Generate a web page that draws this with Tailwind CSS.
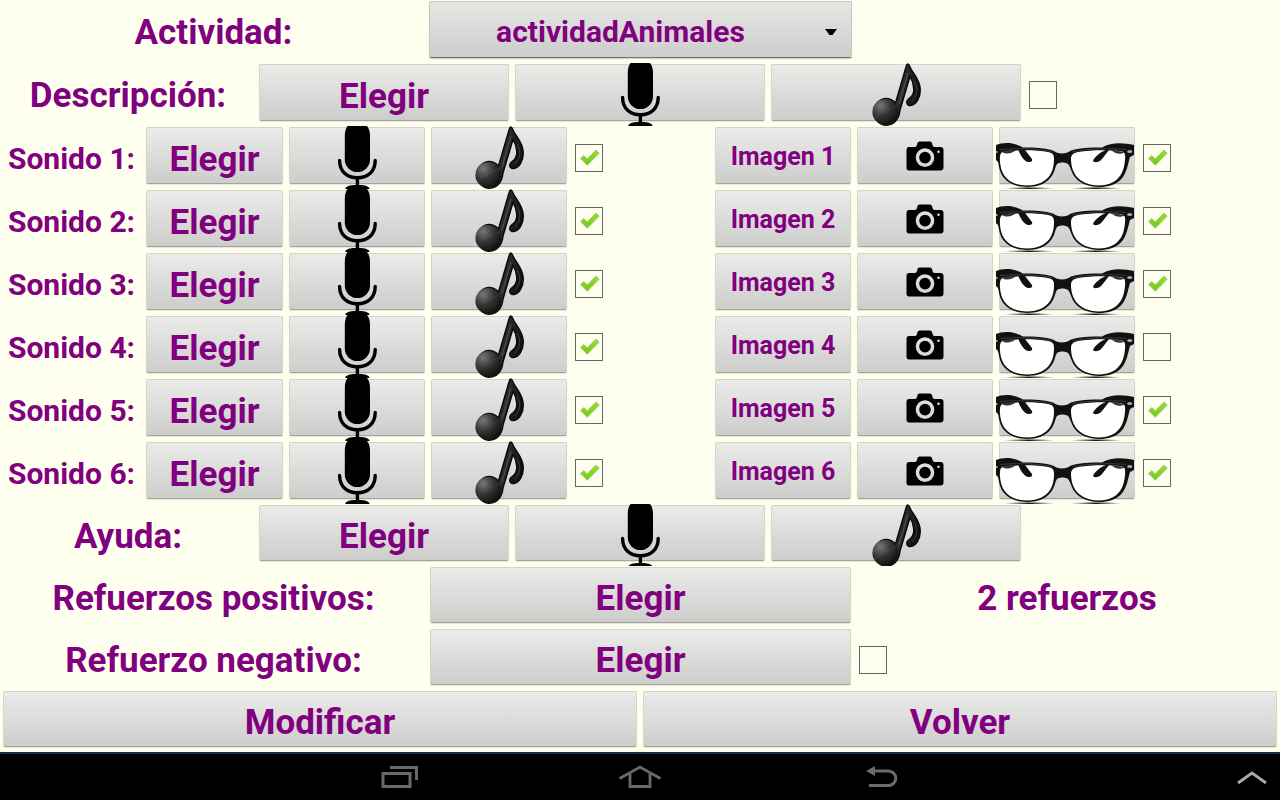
<!DOCTYPE html>
<html lang="es">
<head>
<meta charset="utf-8">
<meta name="viewport" content="width=device-width, initial-scale=1">
<title>Modificar actividad</title>
<script src="https://cdn.jsdelivr.net/npm/@tailwindcss/browser@4"></script>
</head>
<body class="flex min-h-screen flex-col bg-[#fffff0] font-['Roboto','Noto_Sans',sans-serif] font-bold text-[#800080]">

<svg class="absolute h-0 w-0" aria-hidden="true">
  <defs>
    <radialGradient id="ball" cx="0.3" cy="0.25" r="0.85">
      <stop offset="0" stop-color="#777"/><stop offset="0.5" stop-color="#333"/><stop offset="1" stop-color="#0c0c0c"/>
    </radialGradient>
    <linearGradient id="stem" x1="0" y1="0" x2="1" y2="0.3">
      <stop offset="0" stop-color="#111"/><stop offset="0.45" stop-color="#3c3c3c"/><stop offset="1" stop-color="#111"/>
    </linearGradient>
    <linearGradient id="tick" x1="0" y1="0" x2="0" y2="1">
      <stop offset="0" stop-color="#98e02c"/><stop offset="1" stop-color="#6fcb10"/>
    </linearGradient>
    <linearGradient id="shade">
      <stop offset="0" stop-color="#111" stop-opacity="0"/><stop offset="0.5" stop-color="#111"/><stop offset="1" stop-color="#111" stop-opacity="0"/>
    </linearGradient>
    <symbol id="mic" viewBox="0 0 40 63">
      <path d="M10.500 0H30Q33 3.500 33 10V33.500A12.600 12.600 0 0 1 7.800 33.500V10Q7.800 3.500 10.500 0Z"/>
      <path d="M2.600 34.500C2.600 45.500 10 51.800 20.400 51.800S38.200 45.500 38.200 34.500" fill="none" stroke="#000" stroke-width="3.400" stroke-linecap="round"/>
      <path d="M18.700 52H22.100V59C28 59 32.500 60.500 32.500 63H8.300C8.300 60.500 12.800 59 18.700 59Z"/>
    </symbol>
    <symbol id="note" viewBox="0 0 50 63">
      <path d="M36.800 1C38 1 38.500 3 39.500 5C43 12 49.300 17 49.300 27C49.300 35 45 42.500 39.500 42.500C35.500 42.500 34.500 38.500 37.500 36C42 33 43.500 29 42.500 24C42 19 40.500 16 39 13.500L29 47C28 58 21.500 62.300 14.500 62.300A13.500 13.500 0 0 1 14.500 35.500C19 35.500 22 37 24.500 40L35 4C35.500 2 36 1 36.800 1Z" fill="url(#stem)" stroke="#080808" stroke-width="1.400"/>
      <circle cx="14.300" cy="48.900" r="12.900" fill="url(#ball)"/>
      <path d="M4 56C8 48 15 47 25.500 43" stroke="#666" stroke-width="0.600" fill="none" opacity="0.500"/>
      <path d="M37 10L28 41" stroke="#666" stroke-width="1.200" fill="none" opacity="0.600"/>
      <path d="M43 18C47 25 47 32 41 38" stroke="#666" stroke-width="1" fill="none" opacity="0.500"/>
    </symbol>
    <symbol id="camera" viewBox="0 0 38 30">
      <path fill-rule="evenodd" d="M3 6H9Q10.500 6 11 4L11.500 2Q12 .5 13.500 .5H24Q25.500 .5 26 2L26.500 4Q27 6 28.500 6H34.500Q37.500 6 37.500 9V26.500Q37.500 29.500 34.500 29.500H3Q.5 29.500 .5 26.500V9Q.5 6 3 6ZM19 7.300A9.300 9.300 0 1 0 19 25.900A9.300 9.300 0 1 0 19 7.300ZM32.500 9.500A1.300 1.300 0 1 0 32.500 12.100A1.300 1.300 0 1 0 32.500 9.500Z"/>
      <circle cx="19" cy="16.600" r="5.800"/>
    </symbol>
    <symbol id="glasses" viewBox="0 0 139 63">
      <ellipse cx="33" cy="62.500" rx="25" ry="1" fill="url(#shade)"/>
      <ellipse cx="100" cy="62.500" rx="25" ry="1" fill="url(#shade)"/>
      <path d="M0 19C7 16 18 16 27 21.500C38 21.500 50 22 57 24.500C62 28.500 70 28.500 75 24.500C82 22 94 21.500 106 21.500C115 16 127 16.500 138 19V29L134 31C132 38 131 45 127 51C121 59 112 61 103 61C92 61 83 57 78 50C75 45 74 40 72 38C69 36 64 36 61 38C59 41 59 46 55 51C50 58 41 61 31 61C21 61 13 58 8 52C3 46 3 39 2 36L0 34Z" fill="#111"/>
      <path d="M4 36C3.500 28 4.500 25.500 10 25C25 24 42 24 52 26C57 27 58 29 58 33C58 44 54 59 31 59.500C11 59 5 48 4 36Z" fill="#fff"/>
      <path d="M75 33C75 29 77 27 82 26C94 24 112 24 124 25C129 25.500 129.500 28 129 34C128 46 123 59 103 59.500C80 59 75 44 75 33Z" fill="#fff"/>
      <path d="M22 23C24 29 28 35 32 36C35 36.500 37 35 36 33L29 24ZM112 23C106 25 98 31 97 35C98 37 103 36.500 106 33L113 24Z" fill="#111"/>
      <path d="M5 25C9 29 16 28 20 24ZM115 24C119 28 125 29 129 26Z" fill="#333"/>
      <path d="M4 23.500C20 22 45 22.500 57 26M76 26C90 22.500 118 22 130 23.500" stroke="#444" stroke-width="0.800" fill="none"/>
      <ellipse cx="133.700" cy="25.500" rx="2.600" ry="1.500" fill="#aaa"/>
      <path d="M0 26h1.500" stroke="#aaa" stroke-width="2"/>
    </symbol>
    <symbol id="check" viewBox="0 0 28 28">
      <path d="M5.500 14.500L8.800 11.500L12.200 14.800L21 6L24.300 9L12.300 21.300Z" fill="url(#tick)" stroke="#a9bd92" stroke-width="0.800" stroke-linejoin="round"/>
    </symbol>
  </defs>
</svg>

<template id="text-button">
  <button type="button" class="mx-[3px] mt-px mb-[5px] flex min-w-0 items-center justify-center rounded-[2px] border border-[#d3d3c8] border-b-[#a3a3a0] bg-linear-to-b from-[#ebebea] to-[#cdcdcc] shadow-[0_1px_1px_#0000001a]"><span></span></button>
</template>
<template id="icon-button">
  <button type="button" class="grid min-w-0 grid-cols-1">
    <span class="col-start-1 row-start-1 mx-[3px] mt-px mb-[5px] rounded-[2px] border border-[#d3d3c8] border-b-[#a3a3a0] bg-linear-to-b from-[#ebebea] to-[#cdcdcc] shadow-[0_1px_1px_#0000001a]"></span>
    <svg aria-hidden="true"><use></use></svg>
  </button>
</template>
<template id="check-box">
  <label class="flex items-center pt-px pl-[5px]">
    <span class="grid">
      <input type="checkbox" class="peer col-start-1 row-start-1 size-7 appearance-none border border-[#666]">
      <svg class="pointer-events-none invisible col-start-1 row-start-1 size-7 peer-checked:visible" aria-hidden="true"><use href="#check"></use></svg>
    </span>
  </label>
</template>

<main>
  <div class="grid min-h-[63px] grid-cols-[427fr_427fr_426fr]">
    <label for="activity" class="flex items-center justify-center pt-1 text-[35px]">Actividad:</label>
    <div class="mx-[2px] mt-px mb-[5px] grid grid-cols-1">
      <select id="activity" class="col-start-1 row-start-1 appearance-none rounded-[2px] border border-[#c8c8c0] border-b-[#757573] bg-linear-to-b from-[#e6e6e4] to-[#cdcdcc] pt-1 pr-10 text-center text-3xl shadow-[0_1px_1px_#00000033]"><option>actividadAnimales</option></select>
      <svg class="pointer-events-none col-start-1 row-start-1 mt-1 mr-[15px] h-[6px] w-3 self-center justify-self-end fill-black" viewBox="0 0 12 6" aria-hidden="true"><path d="M0 0H12L7.500 6H4.500Z"/></svg>
    </div>
  </div>

  <div id="description" class="grid min-h-[63px] grid-cols-5">
    <div class="flex items-center justify-center pt-1 text-[35px]">Descripción:</div>
  </div>

  <div id="items"></div>

  <div id="help" class="grid min-h-[62px] grid-cols-5 overflow-hidden">
    <div class="flex items-center justify-center pt-1 text-[35px]">Ayuda:</div>
  </div>
  <div id="positive" class="grid min-h-[62px] grid-cols-[427fr_427fr_426fr]">
    <div class="flex items-center justify-center pt-1 text-[35px]">Refuerzos positivos:</div>
  </div>
  <div id="negative" class="grid min-h-[62px] grid-cols-[427fr_427fr_426fr]">
    <div class="flex items-center justify-center pt-1 text-[35px]">Refuerzo negativo:</div>
  </div>
  <div id="actions" class="grid min-h-[62px] grid-cols-2"></div>
</main>

<nav class="mt-auto grid h-12 grid-cols-[1fr_240px_240px_240px_1fr] items-center border-t-2 border-[#0c3442] bg-black text-[#6a6a6a]">
  <button type="button" aria-label="Recientes" class="col-start-2 justify-self-center">
    <svg class="h-6 w-[38px]" viewBox="0 0 38 24" fill="none" stroke="currentColor" stroke-width="3"><path d="M2 8.500H29V21.500H2ZM9 2.500H35.500V15"/></svg>
  </button>
  <button type="button" aria-label="Inicio" class="justify-self-center">
    <svg class="h-6 w-[42px]" viewBox="0 0 42 24" fill="none" stroke="currentColor" stroke-width="2.800"><path d="M.5 13.500L21 2L41.500 13.500"/><path d="M11 8.500V21.500H31V8.500"/></svg>
  </button>
  <button type="button" aria-label="Atrás" class="justify-self-center">
    <svg class="h-6 w-9" viewBox="-4 0 36 24" fill="none" stroke="currentColor" stroke-width="3"><path d="M8 6H22.500A7 7 0 0 1 22.500 20.500H3"/><path d="M0 6L9 1V11Z" fill="currentColor" stroke="none"/></svg>
  </button>
  <button type="button" aria-label="Mostrar panel" class="mr-[13px] justify-self-end text-[#a8a8a8]">
    <svg class="h-4 w-[30px]" viewBox="0 0 30 16" fill="none" stroke="currentColor" stroke-width="2.800"><path d="M1 14L15 4L29 14"/></svg>
  </button>
</nav>

<script>
  const clone = id => document.getElementById(id).content.firstElementChild.cloneNode(true);
  const iconClasses = {
    mic: 'col-start-1 row-start-1 h-[63px] w-10 -mb-px self-start justify-self-center',
    note: 'col-start-1 row-start-1 h-[63px] w-[50px] -mb-px self-start justify-self-center',
    camera: 'col-start-1 row-start-1 mb-1 h-[30px] w-[38px] self-center justify-self-center',
    glasses: 'col-start-1 row-start-1 h-[63px] w-[139px] -mb-px self-start justify-self-start',
  };
  function text(label, classes) {
    const b = clone('text-button'), s = b.firstElementChild;
    s.textContent = label;
    s.className = classes;
    return b;
  }
  function icon(name, label) {
    const b = clone('icon-button'), s = b.querySelector('svg');
    b.setAttribute('aria-label', label);
    s.setAttribute('class', iconClasses[name]);
    s.firstElementChild.setAttribute('href', '#' + name);
    return b;
  }
  function check(label, on) {
    const c = clone('check-box'), i = c.querySelector('input');
    i.setAttribute('aria-label', label);
    i.checked = on;
    return c;
  }
  const large = 'pt-2 text-[35px] leading-10';
  const $ = id => document.getElementById(id);

  $('description').append(text('Elegir', large), icon('mic', 'Grabar descripción'), icon('note', 'Escuchar descripción'), check('Descripción', false));
  for (let n = 1; n <= 6; n++) {
    const row = document.createElement('div');
    row.className = 'grid min-h-[63px] grid-cols-[143fr_143fr_142fr_142fr_142fr_142fr_142fr_142fr_142fr]';
    const name = document.createElement('div');
    name.className = 'flex items-center justify-center pt-0.5 text-3xl whitespace-nowrap';
    name.textContent = `Sonido ${n}:`;
    row.append(name, text('Elegir', large), icon('mic', `Grabar sonido ${n}`), icon('note', `Escuchar sonido ${n}`), check(`Sonido ${n}`, true),
      text(`Imagen ${n}`, 'pt-0.5 text-[25px] whitespace-nowrap'), icon('camera', `Fotografiar imagen ${n}`), icon('glasses', `Ver imagen ${n}`), check(`Imagen ${n}`, n !== 4));
    $('items').append(row);
  }
  $('help').append(text('Elegir', large), icon('mic', 'Grabar ayuda'), icon('note', 'Escuchar ayuda'));
  const count = document.createElement('output');
  count.className = 'flex items-center justify-center pt-1 text-[35px]';
  count.textContent = '2 refuerzos';
  $('positive').append(text('Elegir', large), count);
  $('negative').append(text('Elegir', large), check('Refuerzo negativo', false));
  $('actions').append(text('Modificar', large), text('Volver', large));
</script>
</body>
</html>
